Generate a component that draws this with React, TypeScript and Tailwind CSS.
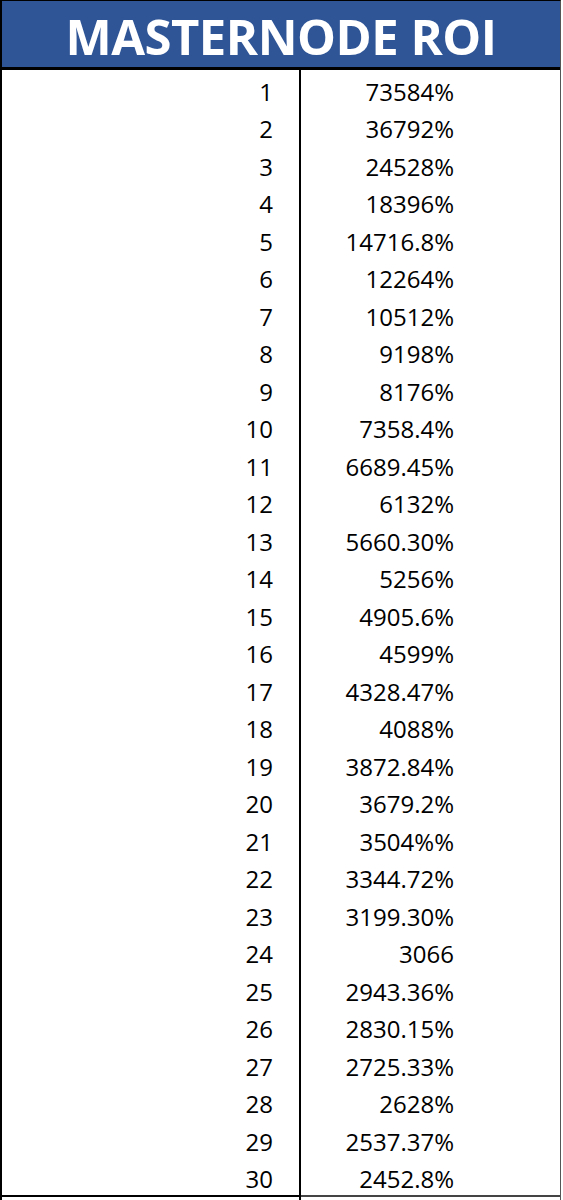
import React from 'react';

const rows: [number, string][] = [
  [1, '73584%'],
  [2, '36792%'],
  [3, '24528%'],
  [4, '18396%'],
  [5, '14716.8%'],
  [6, '12264%'],
  [7, '10512%'],
  [8, '9198%'],
  [9, '8176%'],
  [10, '7358.4%'],
  [11, '6689.45%'],
  [12, '6132%'],
  [13, '5660.30%'],
  [14, '5256%'],
  [15, '4905.6%'],
  [16, '4599%'],
  [17, '4328.47%'],
  [18, '4088%'],
  [19, '3872.84%'],
  [20, '3679.2%'],
  [21, '3504%%'],
  [22, '3344.72%'],
  [23, '3199.30%'],
  [24, '3066'],
  [25, '2943.36%'],
  [26, '2830.15%'],
  [27, '2725.33%'],
  [28, '2628%'],
  [29, '2537.37%'],
  [30, '2452.8%']
];

const App: React.FC = () => {
  return (
    <div
      className="w-[563px] h-[1200px] bg-white overflow-hidden"
      style={{ fontFamily: '"Open Sans", "Noto Sans", sans-serif' }}
    >
      <div className="w-[561px] border-l-2 border-t border-r border-r-[#555] border-l-black border-t-black">
        {/* header */}
        <div className="h-[69px] bg-[#2f5597] border-b-[3px] border-black flex items-center justify-center">
          <h1 className="text-white font-bold text-[49px] leading-none tracking-[-0.5px] pt-[4px]">
            MASTERNODE ROI
          </h1>
        </div>

        {/* rows */}
        <div className="flex flex-col">
          {rows.map(([n, roi]) => (
            <div
              key={n}
              className="flex h-[37.5px] items-center pt-[6px] text-[24px] font-medium text-black leading-none"
            >
              <div className="w-[297px] text-right pr-[26px]">{n}</div>
              <div className="w-[2px] self-stretch -mt-[6px] bg-black" />
              <div className="w-[153px] text-right">{roi}</div>
            </div>
          ))}
        </div>
        <div className="flex h-[2px]">
          <div className="w-[297px] bg-black" />
          <div className="w-[2px] bg-black" />
          <div className="flex-1 bg-[#444]" />
        </div>
        <div className="flex h-[10px]">
          <div className="w-[297px]" />
          <div className="w-[2px] bg-black" />
        </div>
      </div>
    </div>
  );
};

export default App;
